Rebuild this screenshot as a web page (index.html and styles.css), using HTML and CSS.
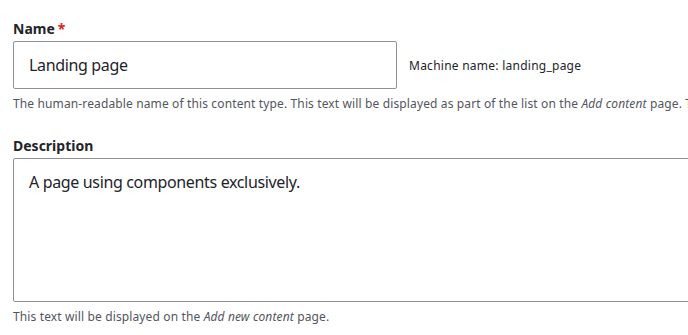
FILE: index.html
```html
<!DOCTYPE html>
<html lang="en">

<head>
    <meta charset="utf-8">
    <meta name="viewport" content="width=device-width, initial-scale=1.0">
    <title>Content type</title>
    <link rel="stylesheet" href="styles.css">
</head>

<body>
    <form class="type-form">
        <div class="form-item">
            <label class="form-label" for="edit-name">Name<span class="required">*</span></label>
            <div class="name-row">
                <input type="text" id="edit-name" class="form-text" value="Landing page">
                <span class="machine-name">Machine name: landing_page</span>
            </div>
            <div class="form-desc">The human-readable name of this content type. This text will be displayed as part of the list on the <em>Add content</em> page. This name must be unique.</div>
        </div>

        <div class="form-item">
            <label class="form-label" for="edit-description">Description</label>
            <textarea id="edit-description" class="form-textarea">A page using components exclusively.</textarea>
            <div class="form-desc">This text will be displayed on the <em>Add new content</em> page.</div>
        </div>
    </form>
</body>

</html>
```

FILE: styles.css
```css
html {
    font-family: 'Noto Sans', sans-serif;
    box-sizing: border-box;
}

*, *::before, *::after {
    box-sizing: inherit;
}

body {
    margin: 0px;
    padding: 20px 0px 0px 13px;
    color: #232429;
    background: #fff;
    overflow: hidden;
}

.type-form {
    width: 760px;
}

.form-item {
    margin-bottom: 25px;
}

.form-label {
    display: block;
    font-size: 14px;
    font-weight: 700;
    line-height: 18px;
    margin-bottom: 3px;
}

.required {
    color: #dc2323;
    margin-left: 3px;
}

.name-row {
    display: flex;
    align-items: center;
    gap: 12px;
}

.form-text,
.form-textarea {
    font-family: inherit;
    font-size: 16px;
    line-height: 24px;
    letter-spacing: -0.35px;
    color: #232429;
    padding: 11px 15px;
    border: 1px solid #8e929c;
    border-radius: 2px;
    background: #fff;
    margin: 0px;
}

.form-text {
    width: 384px;
    height: 48px;
}

.form-textarea {
    display: block;
    width: 740px;
    height: 144px;
    resize: none;
}

.machine-name {
    font-size: 12px;
    letter-spacing: 0.25px;
}

.form-desc {
    margin-top: 6px;
    font-size: 12px;
    line-height: 17px;
    letter-spacing: 0.13px;
    color: #545560;
    white-space: nowrap;
}
```
